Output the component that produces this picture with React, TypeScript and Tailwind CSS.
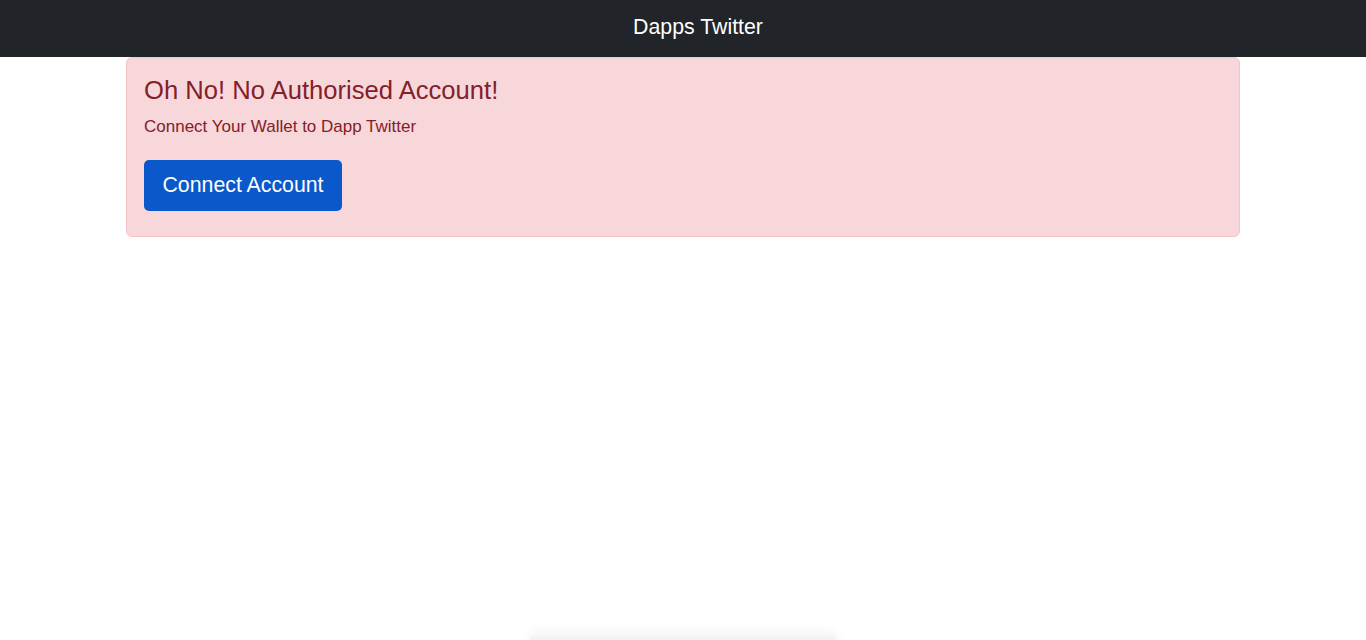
export default function App() {
  return (
    <div className="min-h-screen bg-white font-['Liberation_Sans',Arial,sans-serif]">
      <nav className="h-[57px] bg-[#212529] flex justify-center pt-[11px] pl-[30px]">
        <span className="text-[21.3px] leading-[32px] text-white">Dapps Twitter</span>
      </nav>
      <div className="mx-auto w-[1114px]">
        <div className="h-[180px] rounded-[6px] border border-[#f5c2c7] bg-[#f8d7da] px-[17px] pt-[17px] text-[#842029]">
          <h4 className="text-[25.6px] leading-[1.2] mb-[8px]">Oh No! No Authorised Account!</h4>
          <p className="text-[17px] leading-[25.5px]">Connect Your Wallet to Dapp Twitter</p>
          <button className="mt-[21px] h-[51px] w-[198px] rounded-[5px] bg-[#0a58ca] text-[21.3px] text-white">
            Connect Account
          </button>
        </div>
      </div>
      <div className="mx-auto mt-[400px] h-[40px] w-[306px] bg-[#f2f2f2] shadow-[0_-4px_12px_rgba(0,0,0,0.06)]" />
    </div>
  );
}
